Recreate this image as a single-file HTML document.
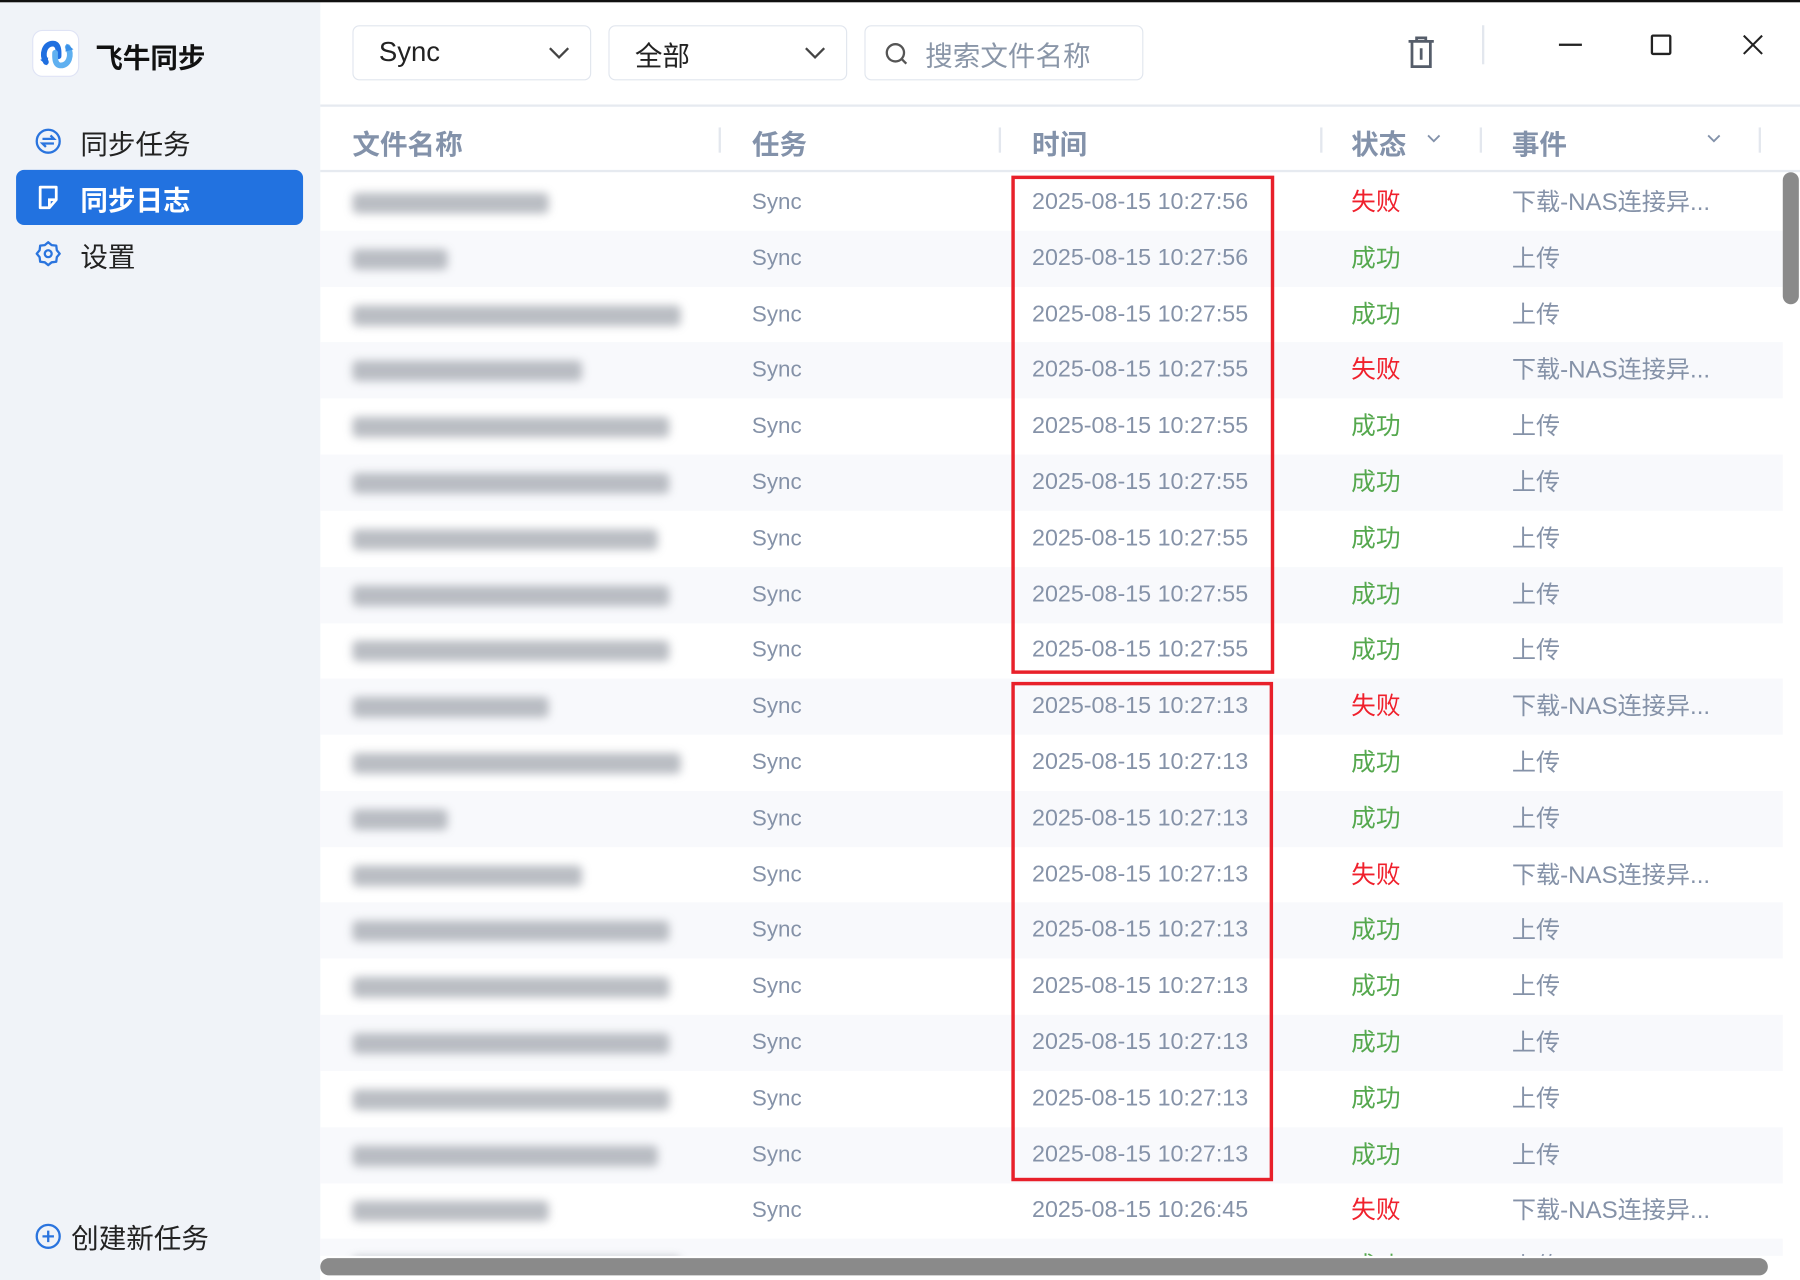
<!DOCTYPE html>
<html><head><meta charset="utf-8">
<style>
*{margin:0;padding:0;box-sizing:border-box}
html,body{width:1800px;height:1280px;overflow:hidden;background:#fff}
#w{position:absolute;left:0;top:0;width:1568px;height:1115px;transform:scale(1.147959);transform-origin:0 0;font-family:"Liberation Sans","Noto Sans CJK SC",sans-serif;background:#fff;overflow:hidden}
.abs{position:absolute}
#side{left:0;top:0;width:279px;height:1115px;background:#f0f3f8}
.nav{position:absolute;left:14px;width:250px;height:48px;border-radius:7px;font-size:24px;color:#222;display:flex;align-items:center;padding-left:56px}
.nav svg{position:absolute;left:16px;top:12px}
.dd{position:absolute;top:22px;height:48px;border:1.5px solid #e1e6ee;border-radius:6px;font-size:24px;color:#222;display:flex;align-items:center;padding-left:22px}
.hd{position:absolute;top:106px;font-size:24px;font-weight:bold;color:#8392aa}
.sep{position:absolute;top:111px;width:1.5px;height:22px;background:#e3e7ee}
.row{position:absolute;left:279px;width:1274px;height:49px;color:#8592a8}
.row.alt{background:#f8f9fc}
.row span{position:absolute;top:0;line-height:49px;white-space:nowrap}
.blur{position:absolute;top:16px;left:28px;height:18px;background:#aeb2b9;filter:blur(4px);border-radius:4px;opacity:.85}
.ok{color:#55a84e}.no{color:#f0202c}
.red{position:absolute;border:3px solid #e8202a;left:881px;width:229px}
</style></head><body><div id="w">
<div class="abs" style="left:0;top:0;width:1568px;height:1.5px;background:#111;z-index:5"></div>
<div id="side" class="abs">
 <div class="abs" style="left:28px;top:26px;width:41px;height:41px;border-radius:9px;background:#fff;border:1px solid #dfe3f5">
  <svg width="41" height="41" viewBox="0 0 41 41"><path d="M11 27 C7 20 10 11 17 11 C23 11 22 20 22 22" fill="none" stroke="#1f6fe0" stroke-width="5" stroke-linecap="round"/><path d="M30 14 C34 21 31 30 24 30 C18 30 19 21 19 19" fill="none" stroke="#5fb0f0" stroke-width="5" stroke-linecap="round"/><path d="M6 25 L12 30 L13 23Z" fill="#1f6fe0"/><path d="M35 16 L29 11 L28 18Z" fill="#3a90e8"/></svg>
 </div>
 <div class="abs" style="left:83px;top:31px;font-size:24px;font-weight:bold;color:#111">飞牛同步</div>
 <div class="nav" style="top:99px"><svg width="24" height="24" viewBox="0 0 24 24"><circle cx="12" cy="12" r="10" fill="none" stroke="#2a74de" stroke-width="2"/><path d="M7 10h10l-3-3M17 14H7l3 3" fill="none" stroke="#2a74de" stroke-width="2"/></svg>同步任务</div>
 <div class="nav" style="top:148px;background:#2272e0;color:#fff;font-weight:bold"><svg width="24" height="24" viewBox="0 0 24 24"><path d="M5 3h14v11l-6 7H5z" fill="none" stroke="#fff" stroke-width="2.4" stroke-linejoin="round"/><path d="M13 21v-7h6" fill="none" stroke="#fff" stroke-width="2.4"/></svg>同步日志</div>
 <div class="nav" style="top:197px"><svg width="24" height="24" viewBox="0 0 24 24"><path d="M12 2l3 2.5 4 .5 .5 4 2.5 3-2.5 3-.5 4-4 .5-3 2.5-3-2.5-4-.5-.5-4L2 12l2.5-3 .5-4 4-.5z" fill="none" stroke="#2a74de" stroke-width="2" stroke-linejoin="round"/><circle cx="12" cy="12" r="3" fill="none" stroke="#2a74de" stroke-width="2"/></svg>设置</div>
 <div class="abs" style="left:30px;top:1059px;font-size:24px;color:#222;display:flex;align-items:center"><svg width="24" height="24" viewBox="0 0 24 24" style="margin-right:8px"><circle cx="12" cy="12" r="10" fill="none" stroke="#2a74de" stroke-width="2"/><path d="M12 7v10M7 12h10" stroke="#2a74de" stroke-width="2"/></svg>创建新任务</div>
</div>
<div class="dd" style="left:307px;width:208px">Sync<svg class="abs" style="left:168px;top:16px" width="22" height="14" viewBox="0 0 22 14"><path d="M3 3l8 8 8-8" fill="none" stroke="#444" stroke-width="2"/></svg></div>
<div class="dd" style="left:530px;width:208px">全部<svg class="abs" style="left:168px;top:16px" width="22" height="14" viewBox="0 0 22 14"><path d="M3 3l8 8 8-8" fill="none" stroke="#444" stroke-width="2"/></svg></div>
<div class="dd" style="left:753px;width:243px;color:#8a96a8;padding-left:52px">搜索文件名称<svg class="abs" style="left:16px;top:13px" width="22" height="22" viewBox="0 0 22 22"><circle cx="10" cy="10" r="7.5" fill="none" stroke="#555" stroke-width="2"/><path d="M15.5 15.5l4 4" stroke="#555" stroke-width="2"/></svg></div>
<svg class="abs" style="left:1225px;top:31px" width="26" height="30" viewBox="0 0 26 30"><path d="M2 5h22M9 5V2h8v3M5 5v22h16V5M13 11v10" fill="none" stroke="#555d6a" stroke-width="2.4"/></svg>
<div class="abs" style="left:1291px;top:22px;width:1.5px;height:34px;background:#e3e7ee"></div>
<div class="abs" style="left:1358px;top:38px;width:20px;height:2px;background:#222"></div>
<div class="abs" style="left:1438px;top:30px;width:18px;height:18px;border:2px solid #222;border-radius:2px"></div>
<svg class="abs" style="left:1517px;top:29px" width="20" height="20" viewBox="0 0 20 20"><path d="M2 2l16 16M18 2L2 18" stroke="#222" stroke-width="1.8"/></svg>
<div class="abs" style="left:279px;top:91px;width:1289px;height:2px;background:#e6eaf0"></div>
<div class="hd" style="left:307px">文件名称</div>
<div class="sep" style="left:626px"></div>
<div class="hd" style="left:655px">任务</div>
<div class="sep" style="left:870px"></div>
<div class="hd" style="left:899px">时间</div>
<div class="sep" style="left:1150px"></div>
<div class="hd" style="left:1177px">状态</div>
<svg class="abs" style="left:1242px;top:116px" width="14" height="10"><path d="M2 2l5 5 5-5" fill="none" stroke="#8392aa" stroke-width="1.6"/></svg>
<div class="sep" style="left:1289px"></div>
<div class="hd" style="left:1317px">事件</div>
<svg class="abs" style="left:1486px;top:116px" width="14" height="10"><path d="M2 2l5 5 5-5" fill="none" stroke="#8392aa" stroke-width="1.6"/></svg>
<div class="sep" style="left:1532px"></div>
<div class="abs" style="left:279px;top:148px;width:1289px;height:2px;background:#e6eaf0"></div>
<div id="rows"></div>
<div class="red" style="top:153px;height:434px"></div>
<div class="red" style="top:594px;height:435px;width:228px"></div>
<div class="abs" style="left:279px;top:1094px;width:1289px;height:21px;background:#fff"></div>
<div class="abs" style="left:1553px;top:150px;width:14px;height:115px;background:#8a8a8a;border-radius:7px"></div>
<div class="abs" style="left:279px;top:1096px;width:1261px;height:15px;background:#8a8a8a;border-radius:8px"></div>
</div>
<script>
var d=[[1,171,'10:27:56'],[0,83,'10:27:56'],[0,286,'10:27:55'],[1,200,'10:27:55'],[0,276,'10:27:55'],[0,276,'10:27:55'],[0,266,'10:27:55'],[0,276,'10:27:55'],[0,276,'10:27:55'],[1,171,'10:27:13'],[0,286,'10:27:13'],[0,83,'10:27:13'],[1,200,'10:27:13'],[0,276,'10:27:13'],[0,276,'10:27:13'],[0,276,'10:27:13'],[0,276,'10:27:13'],[0,266,'10:27:13'],[1,171,'10:26:45'],[0,286,'10:26:45']];
var h='';d.forEach(function(r,i){var t=152+i*48.8;h+='<div class="row'+(i%2?' alt':'')+'" style="top:'+t+'px"><div class="blur" style="width:'+r[1]+'px"></div><span style="left:376px;font-size:19.5px">Sync</span><span style="left:620px;font-size:20.3px">2025-08-15 '+r[2]+'</span><span class="'+(r[0]?'no':'ok')+'" style="left:898px;font-size:21.5px">'+(r[0]?'失败':'成功')+'</span><span style="left:1038px;font-size:21px">'+(r[0]?'下载-NAS连接异...':'上传')+'</span></div>';});
document.getElementById('rows').innerHTML=h;
</script>
</body></html>
